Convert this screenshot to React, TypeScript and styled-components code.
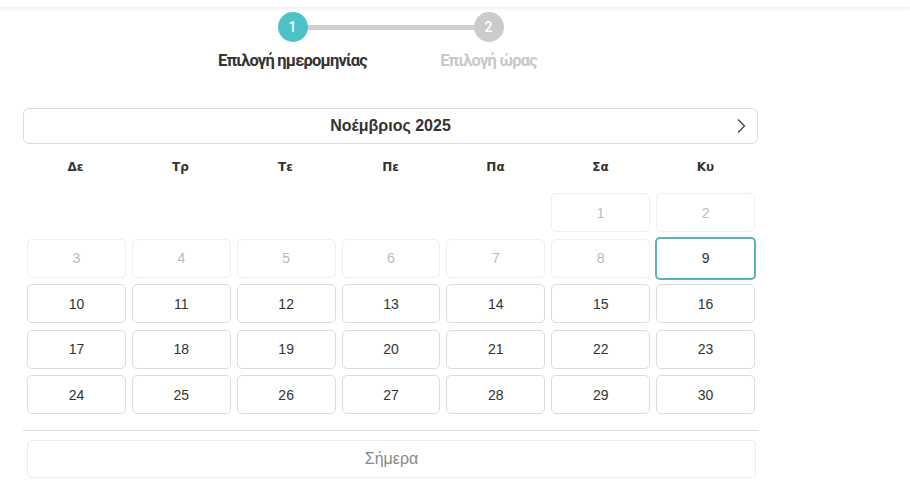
import styled, {createGlobalStyle} from 'styled-components';

const GlobalStyle = createGlobalStyle`
  body {
    margin: 0;
    background: #fff;
    font-family: "Liberation Sans", Arial, sans-serif;
    color: #333;
  }
`;

const WEEKDAYS = ['Δε', 'Τρ', 'Τε', 'Πε', 'Πα', 'Σα', 'Κυ'];
const FIRST_OFFSET = 5; // 1 Nov 2025 is a Saturday
const DAYS_IN_MONTH = 30;
const TODAY = 9;

const steps = [
  {n: 1, label: 'Επιλογή ημερομηνίας', active: true},
  {n: 2, label: 'Επιλογή ώρας', active: false},
];

const App = (): JSX.Element => {
  const cells: (number | null)[] = [
    ...Array(FIRST_OFFSET).fill(null),
    ...Array.from({length: DAYS_IN_MONTH}, (_, i) => i + 1),
  ];

  return (
    <>
      <GlobalStyle/>
      <TopBar/>
      <Page>
        <Stepper>
          <StepLine/>
          {steps.map((s) => (
            <Step key={s.n}>
              <StepDot $active={s.active}>{s.n}</StepDot>
              <StepLabel $active={s.active}>{s.label}</StepLabel>
            </Step>
          ))}
        </Stepper>

        <MonthBar>
          <MonthTitle>Νοέμβριος 2025</MonthTitle>
          <NavButton aria-label="Επόμενος μήνας">
            <svg width="12" height="16" viewBox="0 0 12 16" fill="none">
              <path d="M3 1.5 L9.5 8 L3 14.5" stroke="#444" strokeWidth="1.3"/>
            </svg>
          </NavButton>
        </MonthBar>

        <WeekRow>
          {WEEKDAYS.map((d) => (
            <WeekDay key={d}>{d}</WeekDay>
          ))}
        </WeekRow>

        <DaysGrid>
          {cells.map((d, i) =>
            d === null ? (
              <Blank key={`b${i}`}/>
            ) : (
              <Day key={d} $disabled={d < TODAY} $selected={d === TODAY}>
                {d}
              </Day>
            ),
          )}
        </DaysGrid>

        <Divider/>
        <TodayButton>Σήμερα</TodayButton>
      </Page>
    </>
  );
};

export default App;

const TopBar = styled.div`
  height: 7px;
  background: #fff;
  box-shadow: 0 1px 4px rgba(0, 0, 0, 0.1);
`;

const Page = styled.main`
  width: 735px;
  margin-left: 23px;
`;

const Stepper = styled.div`
  position: relative;
  display: flex;
  justify-content: center;
  padding-top: 5px;
`;

const StepLine = styled.div`
  position: absolute;
  top: 18px;
  left: 50%;
  width: 196px;
  height: 5px;
  margin-left: -98px;
  background: #cfcfcf;
`;

const Step = styled.div`
  position: relative;
  width: 196px;
  display: flex;
  flex-direction: column;
  align-items: center;
`;

const StepDot = styled.div<{$active: boolean}>`
  width: 30px;
  height: 30px;
  border-radius: 50%;
  background: ${({$active}) => ($active ? '#4cc2c8' : '#cbcbcb')};
  color: #fff;
  font-family: Roboto, sans-serif;
  font-size: 14px;
  font-weight: 500;
  display: flex;
  align-items: center;
  justify-content: center;
`;

const StepLabel = styled.div<{$active: boolean}>`
  margin-top: 9px;
  font-family: Roboto, "Noto Sans", sans-serif;
  font-size: 16.5px;
  font-weight: 700;
  letter-spacing: -0.8px;
  white-space: nowrap;
  color: ${({$active}) => ($active ? '#333' : '#c8c8c8')};
`;

const MonthBar = styled.div`
  margin-top: 38px;
  height: 36px;
  border: 1px solid #dcdcdc;
  border-radius: 6px;
  box-sizing: border-box;
  display: flex;
  align-items: center;
  justify-content: center;
  position: relative;
`;

const MonthTitle = styled.h2`
  margin: 0;
  font-size: 16px;
  font-weight: 700;
  color: #333;
`;

const NavButton = styled.button`
  position: absolute;
  right: 10px;
  top: 9px;
  padding: 0;
  border: 0;
  background: none;
  display: flex;
  cursor: pointer;
`;

const WeekRow = styled.div`
  display: grid;
  grid-template-columns: repeat(7, 1fr);
  height: 45px;
  align-items: center;
`;

const WeekDay = styled.div`
  text-align: center;
  font-family: "DejaVu Sans", Verdana, sans-serif;
  font-size: 12px;
  font-weight: 700;
  color: #333;
`;

const DaysGrid = styled.div`
  display: grid;
  grid-template-columns: repeat(7, 1fr);
  grid-auto-rows: 39px;
  row-gap: 6.5px;
  column-gap: 6px;
  padding: 4px 3px 0 4px;
`;

const Blank = styled.div``;

const Day = styled.button<{$disabled: boolean; $selected: boolean}>`
  font-family: "Liberation Sans", Arial, sans-serif;
  font-size: 14px;
  background: #fff;
  border-radius: 5px;
  border: 1px solid ${({$disabled}) => ($disabled ? '#efefef' : '#dcdcdc')};
  color: ${({$disabled}) => ($disabled ? '#bbb' : '#333')};
  cursor: ${({$disabled}) => ($disabled ? 'default' : 'pointer')};
  ${({$selected}) =>
    $selected &&
    `
    border: 2px solid #5ab3b7;
    margin: -2px -1px;
  `}
`;

const Divider = styled.hr`
  margin: 16px 0 0;
  border: 0;
  border-top: 1px solid #dcdcdc;
`;

const TodayButton = styled.button`
  display: block;
  width: 729px;
  height: 38px;
  margin: 9px 0 0 4px;
  background: #fff;
  border: 1px solid #ececec;
  border-radius: 5px;
  font-family: "Liberation Sans", Arial, sans-serif;
  font-size: 16px;
  color: #888;
`;
